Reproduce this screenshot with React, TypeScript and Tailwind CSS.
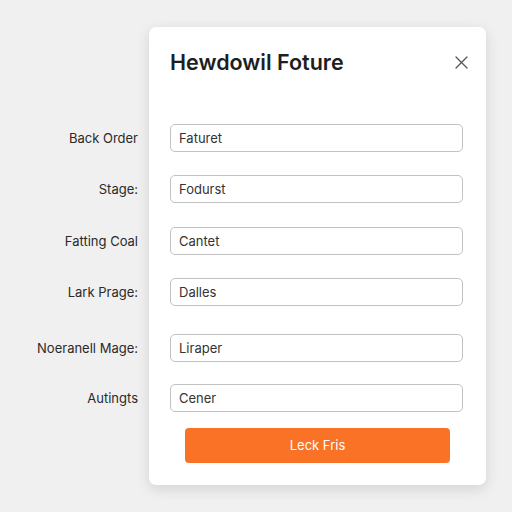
import React from "react";

const rows = [
  { label: "Back Order", value: "Faturet", mt: "mt-0" },
  { label: "Stage:", value: "Fodurst", mt: "mt-[23px]" },
  { label: "Fatting Coal", value: "Cantet", mt: "mt-[24px]" },
  { label: "Lark Prage:", value: "Dalles", mt: "mt-[23px]" },
  { label: "Noeranell Mage:", value: "Liraper", mt: "mt-[28px]" },
  { label: "Autingts", value: "Cener", mt: "mt-[22px]" },
];

export default function App() {
  return (
    <div
      className="w-[512px] h-[512px] bg-[#f0f0f0] overflow-hidden flex pt-[27px]"
      style={{ fontFamily: "Inter, 'Liberation Sans', Arial, sans-serif" }}
    >
      <div className="w-[149px] shrink-0 pt-[98px] pr-[11px] flex flex-col items-end">
        {rows.map((r) => (
          <div
            key={r.label}
            className={`${r.mt} h-[28px] flex items-center text-[13px] text-[#2a2a2a] whitespace-nowrap`}
          >
            {r.label}
          </div>
        ))}
      </div>
      <div className="w-[337px] h-[458px] bg-white rounded-[7px] shadow-[0_4px_14px_rgba(0,0,0,0.12)] pt-[21px] pl-[21px] pr-[23px] flex flex-col">
        <div className="flex items-center justify-between h-[28px]">
          <div className="text-[21.5px] font-semibold text-[#1e1e1e]">Hewdowil Foture</div>
          <svg width="13" height="13" viewBox="0 0 13 13" className="mr-[-5px]">
            <path d="M1 1L12 12M12 1L1 12" stroke="#555" strokeWidth="1.3" strokeLinecap="round" />
          </svg>
        </div>
        <div className="mt-[48px] flex flex-col">
          {rows.map((r) => (
            <div
              key={r.value}
              className={`${r.mt} h-[28px] border border-[#c2c2c2] rounded-[5px] flex items-center pl-[8px] pt-[1px] text-[13px] text-[#333]`}
            >
              {r.value}
            </div>
          ))}
        </div>
        <button className="mt-[16px] ml-[15px] mr-[13px] h-[35px] rounded-[4px] bg-[#f97226] text-white text-[13px] flex items-center justify-center">
          Leck Fris
        </button>
      </div>
    </div>
  );
}
